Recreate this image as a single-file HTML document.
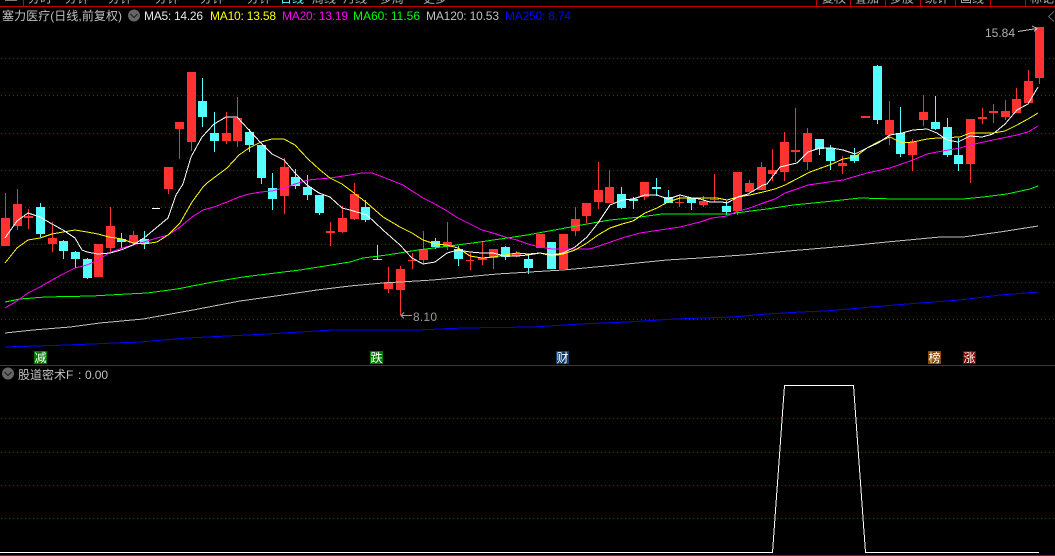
<!DOCTYPE html>
<html lang="zh"><head><meta charset="utf-8"><title>塞力医疗</title>
<style>
html,body{margin:0;padding:0;background:#000;width:1055px;height:556px;overflow:hidden}
svg{display:block;position:absolute;left:0;top:0}
text{font-family:"Liberation Sans","WenQuanYi Zen Hei","Noto Sans CJK SC",sans-serif;font-size:12px}
.l{fill:none;stroke-width:1;shape-rendering:crispEdges}
.c{shape-rendering:crispEdges}
</style></head><body>
<svg width="1055" height="556" viewBox="0 0 1055 556" xmlns="http://www.w3.org/2000/svg">
<defs><clipPath id="top"><rect x="0" y="0" width="1055" height="6"/></clipPath>
<pattern id="dots" x="1" y="0" width="4" height="1" patternUnits="userSpaceOnUse"><rect class="c" width="1" height="1" fill="#8c0000"/></pattern></defs>
<rect width="1055" height="556" fill="#000"/>
<!-- top tabs -->
<g clip-path="url(#top)" fill="#b0b0b0">
<rect x="5" y="0" width="12" height="1" fill="#808080"/>
<text x="28" y="2.5">分时</text><text x="65" y="2.5">分钟</text><text x="108" y="2.5">分钟</text><text x="155" y="2.5">分钟</text><text x="200" y="2.5">分钟</text><text x="247" y="2.5">分钟</text><text x="280" y="2.5" fill="#54ffff">日线</text><text x="312" y="2.5">周线</text><text x="343" y="2.5">月线</text><text x="380" y="2.5">多周</text><text x="423" y="2.5">更多</text>
<text x="822" y="2.5">复权</text><text x="855" y="2.5">叠加</text><text x="890" y="2.5">多股</text><text x="925" y="2.5">统计</text><text x="960" y="2.5">画线</text><text x="1030" y="2.5">标记</text>
</g>
<path class="c" fill="none" stroke="#c00000" d="M23.5 0V6M816.5 0V6M850.5 0V6M885.5 0V6M920.5 0V6M955.5 0V6M990.5 0V6M1025.5 0V6"/>
<path class="c" fill="none" stroke="#c00000" d="M0 6.5H1055M0 365.5H1055M0 555.5H1055"/>
<!-- grids -->
<g class="c" fill="url(#dots)">
<rect x="1" y="58" width="1054" height="1"/><rect x="1" y="95" width="1054" height="1"/><rect x="1" y="133" width="1054" height="1"/><rect x="1" y="170" width="1054" height="1"/><rect x="1" y="207" width="1054" height="1"/><rect x="1" y="244" width="1054" height="1"/><rect x="1" y="282" width="1054" height="1"/><rect x="1" y="319" width="1054" height="1"/><rect x="1" y="418" width="1054" height="1"/><rect x="1" y="452" width="1054" height="1"/><rect x="1" y="485" width="1054" height="1"/><rect x="1" y="518" width="1054" height="1"/>
</g>
<!-- wicks -->
<path class="c" fill="none" stroke="#ff3232" d="M5.5 193V218M17.5 189V230M28.5 209V229M52.5 222V252M110.5 207V253M133.5 231V245M168.5 167V194M179.5 122V159M191.5 72V151M226.5 112V144M237.5 97V147M284.5 158V214M330.5 222V246M342.5 206V233M354.5 183V220M388.5 267V293M400.5 266V315M412.5 253V269M423.5 231V264M447.5 222V250M470.5 253V270M482.5 242V265M493.5 249V269M516.5 251V257M575.5 207V236M586.5 203V223M598.5 162V209M609.5 170V203M644.5 182V200M679.5 196V207M703.5 196V207M714.5 174V202M737.5 172V215M749.5 180V192M761.5 162V190M772.5 149V181M784.5 132V181M795.5 108V162M807.5 128V170M842.5 156V174M889.5 101V145M912.5 139V171M923.5 95V126M970.5 119V183M982.5 108V124M993.5 104V123M1005.5 100V120M1016.5 88V113M1028.5 70V103M1039.5 27V84"/>
<path class="c" fill="none" stroke="#54ffff" d="M40.5 203V237M63.5 240V259M75.5 251V268M87.5 258V279M121.5 233V248M144.5 231V249M202.5 78V127M214.5 112V152M249.5 129V152M261.5 145V184M272.5 173V210M295.5 169V189M307.5 175V200M319.5 195V215M365.5 200V222M377.5 245V260M435.5 238V249M458.5 246V266M505.5 246V260M528.5 255V274M621.5 187V209M633.5 197V209M656.5 178V196M668.5 190V203M691.5 198V210M726.5 201V215M819.5 139V155M830.5 145V170M854.5 148V163M877.5 65V124M900.5 107V157M935.5 96V130M947.5 118V157M958.5 138V171"/>
<!-- bodies -->
<path class="c" fill="#ff3232" d="M1 218h9V246h-9zM13 204h9V226h-9zM24 216h9V218h-9zM48 238h9V244h-9zM94 244h9V277h-9zM106 226h9V248h-9zM129 235h9V243h-9zM164 167h9V189h-9zM175 122h9V129h-9zM187 72h9V142h-9zM222 133h9V141h-9zM233 118h9V141h-9zM280 167h9V196h-9zM326 231h9V233h-9zM338 218h9V232h-9zM350 194h9V219h-9zM384 282h9V289h-9zM396 269h9V290h-9zM408 260h8V261h-8zM419 249h9V260h-9zM443 242h9V247h-9zM466 260h8V261h-8zM478 258h9V260h-9zM489 249h9V258h-9zM512 253h9V256h-9zM536 234h9V248h-9zM559 234h9V269h-9zM571 219h9V231h-9zM582 203h9V216h-9zM594 190h9V202h-9zM605 187h9V203h-9zM640 182h9V197h-9zM675 202h9V203h-9zM699 201h9V205h-9zM710 199h9V200h-9zM733 172h9V211h-9zM745 183h9V192h-9zM757 167h9V190h-9zM768 170h9V174h-9zM780 142h9V172h-9zM791 150h9V152h-9zM803 133h9V162h-9zM838 163h9V166h-9zM861 116h9V118h-9zM885 120h9V135h-9zM908 142h9V155h-9zM919 112h9V120h-9zM966 119h9V164h-9zM978 117h9V119h-9zM989 111h9V113h-9zM1001 111h9V117h-9zM1012 99h9V113h-9zM1024 81h9V103h-9zM1035 27h9V78h-9z"/>
<path class="c" fill="#54ffff" d="M36 207h9V234h-9zM59 241h9V251h-9zM71 252h9V259h-9zM83 259h9V278h-9zM117 239h9V242h-9zM140 239h9V244h-9zM198 101h9V117h-9zM210 133h9V141h-9zM245 132h9V145h-9zM257 145h9V178h-9zM268 188h9V199h-9zM291 177h9V186h-9zM303 187h9V195h-9zM315 195h9V213h-9zM361 207h9V220h-9zM373 259h9V260h-9zM431 241h9V247h-9zM454 249h9V259h-9zM501 247h9V257h-9zM524 259h9V268h-9zM547 242h9V269h-9zM617 194h9V208h-9zM629 199h9V201h-9zM652 187h9V189h-9zM664 197h9V203h-9zM687 198h9V203h-9zM722 206h9V212h-9zM815 139h9V149h-9zM826 148h9V161h-9zM850 155h9V161h-9zM873 66h9V120h-9zM896 133h9V154h-9zM931 122h9V129h-9zM943 127h9V155h-9zM954 155h9V164h-9z"/>
<rect class="c" x="152" y="208" width="8" height="1" fill="#fff"/>
<!-- MA lines -->
<polyline class="l" stroke="#0000ff" points="5,347 67,345 140,342 187,338 267,334 333,330 417,330 463,328 533,327 580,324 627,322 675,319 733,317 767,314 800,312 825,311 860,308 907,304 960,300 1000,295 1038,292"/>
<polyline class="l" stroke="#c0c0c0" points="5,333 33,330 70,327 100,323 143,319 193,310 240,301 283,295 317,290 350,286 383,283 433,280 497,274 563,270 617,265 667,260 700,258 743,255 800,250 847,246 887,242 940,237 963,237 1000,232 1038,226"/>
<polyline class="l" stroke="#00ff00" points="5,302 20,299 45,297 92,296 127,294 147,293 177,289 213,282 243,277 300,270 350,262 363,258 387,255 418,250 457,245 480,242 527,235 560,229 587,224 610,220 640,217 662,214 730,214 743,212 767,209 793,205 833,201 860,198 895,199 963,199 983,197 1007,194 1030,189 1038,186"/>
<polyline class="l" stroke="#ff00ff" points="5,308 17,301 28,293 40,287 52,280 63,274 75,268 87,265 98,260 109,253 122,248 133,245 144,242 157,238 168,235 180,227 192,217 203,210 214,207 227,202 239,197 249,194 261,192 272,191 284,188 295,184 308,180 330,178 350,175 362,173 372,173 383,177 403,185 423,198 435,204 447,211 458,218 470,224 482,230 493,233 505,237 517,240 528,244 540,247 552,249 563,249 575,249 590,249 602,245 622,238 640,233 660,230 680,227 700,222 712,218 727,216 738,211 750,208 763,203 775,199 785,193 797,189 808,185 843,180 867,173 890,168 913,160 927,154 937,152 960,148 970,145 993,140 1017,135 1028,132 1038,126"/>
<polyline class="l" stroke="#ffff00" points="5,263 17,248 28,240 40,238 52,234 63,232 75,230 87,232 98,234 109,237 122,239 133,243 144,244 157,242 168,235 180,223 192,202 203,187 207,183 227,168 239,155 249,148 261,142 272,139 284,139 295,145 308,159 320,170 330,178 342,184 350,190 367,203 383,217 400,227 412,233 423,240 435,244 447,245 458,248 470,256 482,258 493,257 505,255 517,253 528,254 540,253 552,256 563,254 575,250 587,243 598,235 610,228 622,224 633,221 645,213 657,208 668,202 680,198 717,198 727,200 738,197 750,195 763,192 775,189 785,185 810,172 832,164 843,159 855,157 867,148 878,142 890,137 902,143 913,142 927,139 937,138 960,137 970,133 993,133 1005,131 1017,125 1028,119 1038,113"/>
<polyline class="l" stroke="#ffffff" points="5,238 17,221 28,213 40,217 52,224 63,230 75,238 82,250 87,252 98,254 110,253 121,250 133,245 144,238 156,228 168,218 176,195 183,184 191,157 202,137 214,124 226,117 237,117 249,130 261,143 272,154 284,160 295,173 307,185 319,193 330,197 342,208 350,210 367,215 383,230 400,245 412,258 423,264 435,262 447,253 458,250 470,252 482,253 493,253 505,256 517,256 528,255 540,253 552,255 563,253 575,247 587,237 598,223 610,205 622,200 633,199 645,195 657,195 668,199 680,195 692,198 700,199 710,202 722,202 727,203 738,197 748,194 763,185 767,184 780,167 797,163 808,152 820,148 832,148 843,150 855,154 867,148 878,143 890,135 902,133 913,130 927,129 937,133 947,140 958,142 970,136 982,137 993,134 1005,124 1017,110 1028,104 1038,87"/>
<!-- header -->
<text x="2" y="20" fill="#c0c0c0" textLength="120">塞力医疗(日线,前复权)</text>
<circle cx="134" cy="15.5" r="6" fill="#666"/><path d="M130.5 14l3.5 3.5 3.5-3.5" fill="none" stroke="#222" stroke-width="1.2"/>
<text x="144" y="20" fill="#e8e8e8" textLength="59">MA5: 14.26</text>
<text x="210" y="20" fill="#ffff00" textLength="66">MA10: 13.58</text>
<text x="282" y="20" fill="#ff00ff" textLength="66">MA20: 13.19</text>
<text x="353" y="20" fill="#00ff00" textLength="67">MA60: 11.56</text>
<text x="426" y="20" fill="#c0c0c0" textLength="73">MA120: 10.53</text>
<text x="505" y="20" fill="#0000ff" textLength="66">MA250: 8.74</text>
<!-- price labels -->
<text x="985" y="37" fill="#b0b0b0" textLength="30">15.84</text>
<path class="c" d="M1018 31.5L1037 28.5M1032 26l5 2.5-3 3" fill="none" stroke="#c0c0c0"/>
<path d="M1054 11.5l-5.5 5 5.5 5" fill="none" stroke="#666"/>
<text x="413" y="321" fill="#999" textLength="24">8.10</text>
<path class="c" d="M401 315.5H412M404 312.5l-3 3 3 3" fill="none" stroke="#a0a0a0"/>
<!-- badges -->
<rect class="c" x="34" y="351" width="13" height="13" fill="#007a00"/><text x="34.5" y="362" fill="#fff">减</text>
<rect class="c" x="370" y="351" width="13" height="13" fill="#007a00"/><text x="370.5" y="362" fill="#fff">跌</text>
<rect class="c" x="556" y="351" width="13" height="13" fill="#0a3c6e"/><text x="556.5" y="362" fill="#fff">财</text>
<rect class="c" x="928" y="351" width="13" height="13" fill="#8a4a00"/><text x="928.5" y="362" fill="#fff">榜</text>
<rect class="c" x="963" y="351" width="13" height="13" fill="#7e0000"/><text x="963.5" y="362" fill="#fff">涨</text>
<!-- lower panel -->
<circle cx="8" cy="373.5" r="6" fill="#666"/><path d="M4.5 372l3.5 3.5 3.5-3.5" fill="none" stroke="#222" stroke-width="1.2"/>
<text x="18" y="379" fill="#c0c0c0">股道密术F</text>
<text x="78" y="379" fill="#c0c0c0">:</text>
<text x="85" y="379" fill="#c0c0c0" textLength="23">0.00</text>
<polyline class="l" stroke="#ffffff" points="0,552.5 772.5,552.5 784.5,385.5 853.5,385.5 865.5,552.5 1039,552.5"/>
</svg>
</body></html>
